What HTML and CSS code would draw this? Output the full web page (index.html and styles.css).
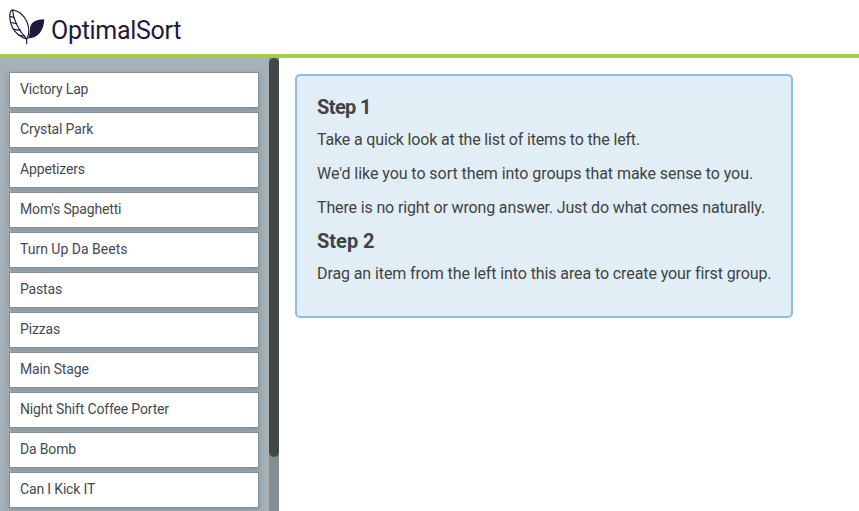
FILE: index.html
```html
<!DOCTYPE html>
<html lang="en">
<head>
<meta charset="utf-8">
<title>OptimalSort</title>
<link rel="stylesheet" href="styles.css">
</head>
<body>
<header class="header">
  <svg class="logo" viewBox="0 0 36 36" aria-hidden="true">
    <g fill="none" stroke="#1f1a3a" stroke-width="1.2" stroke-linejoin="round" stroke-linecap="round">
      <path d="M17.700 30C8 27 .8 19 .8 7C.8 3.500 1.800 1.300 3.500 .8C9 1.700 15 6 18 13C20.500 19 20.500 25 17.700 30Z"/>
      <path d="M3.500 1C4.500 12 9.500 21 17.700 30V34.500"/>
      <path d="M1 7.200L5 8.600M1.800 13.500L7.600 14.600M5 20.400L11.600 21.300M9.500 26L15.500 27"/>
    </g>
    <path fill="#1f1a3a" d="M35.200 10.300C26 10.300 21 14 21 20.500C21 24 20 27 18.800 29.500C29 29 35 22 35.200 10.300Z"/>
  </svg>
  <span class="brand">OptimalSort</span>
</header>
<div class="workspace">
  <aside class="sidebar">
    <ul class="cards">
      <li class="card">Victory Lap</li>
      <li class="card">Crystal Park</li>
      <li class="card">Appetizers</li>
      <li class="card">Mom's Spaghetti</li>
      <li class="card wide">Turn Up Da Beets</li>
      <li class="card">Pastas</li>
      <li class="card">Pizzas</li>
      <li class="card">Main Stage</li>
      <li class="card">Night Shift Coffee Porter</li>
      <li class="card">Da Bomb</li>
      <li class="card">Can I Kick IT</li>
    </ul>
    <div class="scrollbar"><div class="thumb"></div></div>
  </aside>
  <main class="canvas">
    <section class="instructions">
      <h2 class="first">Step 1</h2>
      <p class="look">Take a quick look at the list of items to the left.</p>
      <p class="sort">We'd like you to sort them into groups that make sense to you.</p>
      <p class="answer">There is no right or wrong answer. Just do what comes naturally.</p>
      <h2>Step 2</h2>
      <p class="drag">Drag an item from the left into this area to create your first group.</p>
    </section>
  </main>
</div>
</body>
</html>
```
FILE: styles.css
```css
* { box-sizing: border-box; }
body {
  margin: 0;
  height: 511px;
  overflow: hidden;
  background: #fff;
  color: #424242;
  font-family: Roboto, "Liberation Sans", sans-serif;
}
.header {
  display: flex;
  height: 58px;
  padding: 9px 0 0 9px;
  border-bottom: 4px solid #a2cd48;
}
.logo { width: 36px; height: 36px; }
.brand {
  margin-left: 6px;
  color: #1f1a3a;
  font-size: 25px;
  line-height: 44px;
  letter-spacing: -0.3px;
}
.workspace { display: flex; height: 453px; }
.sidebar {
  display: flex;
  justify-content: space-between;
  width: 279px;
  padding-left: 9px;
  background: #a5b1b6;
}
.cards {
  display: flex;
  flex-direction: column;
  gap: 4px;
  width: 250px;
  margin: 0;
  padding: 14px 0 0;
  list-style: none;
}
.card {
  flex: none;
  height: 36px;
  padding-left: 10px;
  border: 1px solid #849198;
  background: #fff;
  box-shadow: 0 2px 6px rgba(70, 85, 82, .35);
  color: #434a4f;
  font-size: 14px;
  line-height: 33px;
  letter-spacing: -0.16px;
}
.card.wide { letter-spacing: 0; }
.scrollbar { width: 10px; background: #858d90; }
.thumb { height: 399px; border-radius: 5px; background: #434749; }
.canvas { padding: 16px; }
.instructions {
  width: 498px;
  height: 244px;
  padding: 20px;
  border: 2px solid #8dbde2;
  border-radius: 5px;
  background: #e1eef6;
  white-space: nowrap;
}
h2 {
  margin: 0;
  font-size: 20px;
  line-height: 22px;
  font-weight: 700;
}
.first { letter-spacing: -0.6px; }
p {
  margin: 12px 0 14px;
  font-size: 16px;
  line-height: 20px;
}
p + p { margin-top: 0; }
p + h2 { margin-top: -2px; }
.look { letter-spacing: -0.16px; }
.sort { letter-spacing: -0.06px; }
.answer { letter-spacing: -0.14px; }
.drag { letter-spacing: -0.1px; }
```
